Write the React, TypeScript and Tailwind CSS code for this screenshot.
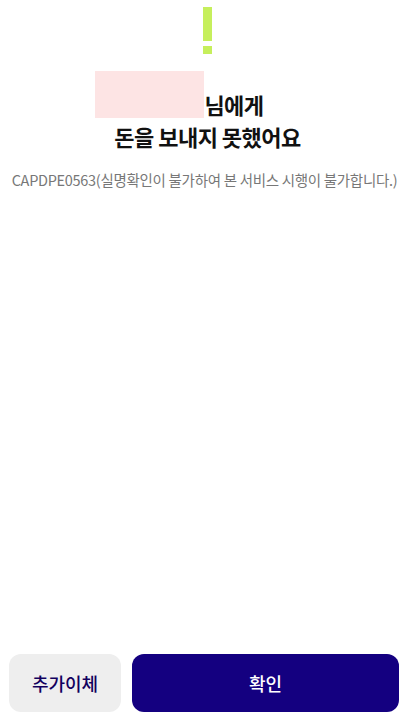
export default function App() {
  return (
    <div
      className="flex h-[718px] w-full flex-col bg-white"
      style={{ fontFamily: '"Noto Sans CJK KR", "Noto Sans", sans-serif' }}
    >
      {/* Warning mark */}
      <div className="flex flex-col items-center pt-[7px]">
        <div className="h-[34px] w-[9px] bg-[#c6ef5c]" />
        <div className="mt-[5px] h-[8px] w-[9px] bg-[#c6ef5c]" />
      </div>

      {/* Title */}
      <div className="mt-[17px] flex items-end justify-center pr-[56px]">
        <div className="h-[47px] w-[109px] bg-[#fde4e4]" />
        <span className="text-[22px] font-bold leading-[28px] tracking-[-0.5px] text-[#111]">님에게</span>
      </div>
      <div className="mt-[4px] text-center text-[22px] font-bold leading-[28px] tracking-[-0.5px] text-[#111]">
        돈을 보내지 못했어요
      </div>

      <p className="mt-[20px] pr-[6px] text-center text-[14.5px] leading-[20px] tracking-[-0.3px] text-[#777]">
        CAPDPE0563(실명확인이 불가하여 본 서비스 시행이 불가합니다.)
      </p>

      <div className="flex-1" />

      {/* Buttons */}
      <div className="flex gap-[11px] pl-[9px] pr-[16px] pb-[6px]">
        <button className="h-[58px] w-[112px] rounded-[12px] bg-[#eeeeee] text-[18px] font-medium text-[#12005e]">
          추가이체
        </button>
        <button className="h-[58px] flex-1 rounded-[12px] bg-[#140080] text-[18px] font-medium text-white">
          확인
        </button>
      </div>
    </div>
  );
}
